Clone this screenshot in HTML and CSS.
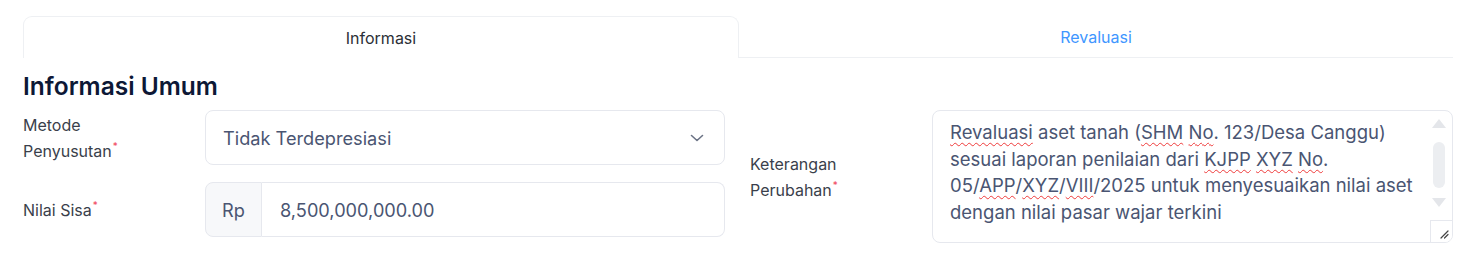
FILE: index.html
```html
<!DOCTYPE html>
<html lang="en">
<head>
  <meta charset="UTF-8" />
  <meta name="viewport" content="width=device-width, initial-scale=1.0" />
  <title>Aset</title>
  <link rel="stylesheet" href="styles.css">
</head>
<body>
  <div class="page">
    <div class="tabs">
      <div class="tab active">Informasi</div>
      <div class="tab">Revaluasi</div>
    </div>

    <h2 class="section-title">Informasi Umum</h2>

    <div class="form-grid">
      <div class="form-col">
        <div class="form-row">
          <label class="form-label">Metode Penyusutan<span class="req">*</span></label>
          <div class="select">
            <span>Tidak Terdepresiasi</span>
            <svg class="chevron" width="14" height="8" viewBox="0 0 14 8">
              <path d="M1.5 1.5 L7 6.5 L12.5 1.5" fill="none" stroke="#6b7385" stroke-width="1.6" stroke-linecap="round" stroke-linejoin="round"/>
            </svg>
          </div>
        </div>
        <div class="form-row">
          <label class="form-label">Nilai Sisa<span class="req">*</span></label>
          <div class="input-group">
            <span class="addon">Rp</span>
            <div class="input">8,500,000,000.00</div>
          </div>
        </div>
      </div>

      <div class="form-col">
        <div class="form-row">
          <label class="form-label">Keterangan Perubahan<span class="req">*</span></label>
          <div class="textarea">
            <div class="textarea-text"><span class="sp">Revaluasi</span> aset tanah (<span class="sp">SHM</span> <span class="sp">No</span>. 123/Desa Canggu)<br>sesuai laporan penilaian dari <span class="sp">KJPP</span> <span class="sp">XYZ</span> <span class="sp">No</span>.<br>05/<span class="sp">APP</span>/<span class="sp">XYZ</span>/<span class="sp">VIII</span>/2025 untuk menyesuaikan nilai aset<br>dengan nilai pasar wajar terkini</div>
            <div class="scrollbar">
              <span class="arrow up"></span>
              <span class="thumb"></span>
              <span class="arrow down"></span>
            </div>
            <div class="resizer">
              <svg width="10" height="10" viewBox="0 0 10 10">
                <path d="M2 9 L9 2 M5.5 9 L9 5.5" stroke="#444" stroke-width="1.2" stroke-linecap="round"/>
              </svg>
            </div>
          </div>
        </div>
      </div>
    </div>
  </div>
</body>
</html>
```

FILE: styles.css
```css
body {
  margin: 0;
  padding: 0;
  background: #fff;
  font-family: Inter, "Noto Sans", sans-serif;
  color: #3a3f4b;
}
.page {
  padding: 16px 19px 0 23px;
}
.tabs {
  display: flex;
  height: 42px;
}
.tab {
  flex: 1;
  display: flex;
  align-items: center;
  justify-content: center;
  font-size: 16px;
  color: #4096ff;
  border-bottom: 1px solid #eef0f3;
}
.tab.active {
  color: #2b2f36;
  border: 1px solid #eef0f3;
  border-bottom: none;
  border-radius: 9px 9px 0 0;
  background: #fff;
}
.section-title {
  margin: 13px 0 9px;
  font-size: 24.5px;
  font-weight: 600;
  color: #0d1836;
  line-height: 30px;
}
.form-grid {
  display: grid;
  grid-template-columns: 702px 703px;
  column-gap: 25px;
  align-items: start;
}
.form-col {
  display: flex;
  flex-direction: column;
  gap: 17px;
}
.form-row {
  display: flex;
  align-items: center;
}
.form-label {
  width: 182px;
  flex-shrink: 0;
  font-size: 16px;
  line-height: 26px;
  color: #3a3f4b;
  padding-right: 56px;
  box-sizing: border-box;
}
.req {
  color: #f0445b;
  font-size: 10px;
  line-height: 0;
  vertical-align: 0.7em;
  margin-left: 1px;
}
.select {
  flex: 1;
  height: 55px;
  box-sizing: border-box;
  border: 1px solid #e6e8ee;
  border-radius: 8px;
  display: flex;
  align-items: center;
  justify-content: space-between;
  padding: 0 20px 0 17px;
  font-size: 18.2px;
  color: #4a5572;
}
.input-group {
  flex: 1;
  display: flex;
  height: 55px;
}
.addon {
  width: 57px;
  box-sizing: border-box;
  border: 1px solid #e6e8ee;
  border-radius: 8px 0 0 8px;
  background: #f7f8fa;
  display: flex;
  align-items: center;
  justify-content: center;
  font-size: 18.2px;
  color: #4a5572;
}
.input {
  flex: 1;
  box-sizing: border-box;
  border: 1px solid #e6e8ee;
  border-left: none;
  border-radius: 0 8px 8px 0;
  display: flex;
  align-items: center;
  padding-left: 18px;
  font-size: 18.2px;
  color: #4a5572;
}
.textarea {
  position: relative;
  flex: 1;
  height: 133px;
  box-sizing: border-box;
  border: 1px solid #e6e8ee;
  border-radius: 8px;
  padding: 8px 24px 0 17px;
  overflow: hidden;
}
.textarea-text {
  font-size: 18.5px;
  line-height: 26.6px;
  color: #4a5572;
  white-space: nowrap;
}
.sp {
  text-decoration: underline wavy #ef3b3b;
  text-decoration-thickness: 1px;
  text-underline-offset: 3px;
}
.scrollbar {
  position: absolute;
  top: 6px;
  right: 6px;
  width: 14px;
  height: 102px;
  display: flex;
  flex-direction: column;
  align-items: center;
}
.arrow {
  width: 0;
  height: 0;
  border-left: 7px solid transparent;
  border-right: 7px solid transparent;
}
.arrow.up {
  border-bottom: 9px solid #e4e6ea;
  margin-top: 2px;
}
.arrow.down {
  border-top: 9px solid #e4e6ea;
}
.thumb {
  width: 12px;
  height: 46px;
  background: #eceef1;
  border-radius: 6px;
  margin: 14px 0 10px;
}
.resizer {
  position: absolute;
  right: 0;
  bottom: 0;
  width: 22px;
  height: 22px;
  border-top: 1px solid #e6e8ee;
  border-left: 1px solid #e6e8ee;
  background: #fff;
  display: flex;
  align-items: flex-end;
  justify-content: flex-end;
  padding: 0 3px 3px 0;
  box-sizing: border-box;
}
```
